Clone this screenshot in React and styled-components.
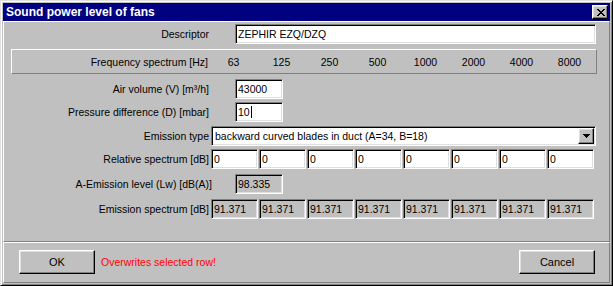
import React from 'react';
import styled, { createGlobalStyle } from 'styled-components';

const FONT = '"Liberation Sans", Arial, sans-serif';

const COLORS = {
  face: '#c0c0c0',
  light: '#dfdfdf',
  shadow: '#808080',
  dark: '#000000',
  white: '#ffffff',
  navy: '#000080',
  alert: '#ff0000',
};

const FREQUENCIES = [63, 125, 250, 500, 1000, 2000, 4000, 8000];
const RELATIVE = ['0', '0', '0', '0', '0', '0', '0', '0'];
const EMISSION = ['91.371', '91.371', '91.371', '91.371', '91.371', '91.371', '91.371', '91.371'];

const GlobalStyle = createGlobalStyle`
  html, body {
    margin: 0;
    padding: 0;
    background: ${COLORS.face};
  }
  body {
    font-family: ${FONT};
    font-size: 10.5px;
    color: ${COLORS.dark};
  }
`;

const CloseGlyph = () => (
  <svg width="8" height="7" viewBox="0 0 8 7" shapeRendering="crispEdges">
    <path
      fill="#000"
      d="M0 0h2v1H0zM6 0h2v1H6zM1 1h2v1H1zM5 1h2v1H5zM2 2h4v1H2zM3 3h2v1H3zM2 4h4v1H2zM1 5h2v1H1zM5 5h2v1H5zM0 6h2v1H0zM6 6h2v1H6z"
    />
  </svg>
);

const ArrowGlyph = () => (
  <svg width="7" height="4" viewBox="0 0 7 4" shapeRendering="crispEdges">
    <path fill="#000" d="M0 0h7v1H0zM1 1h5v1H1zM2 2h3v1H2zM3 3h1v1H3z" />
  </svg>
);

const App = () => {
  return (
    <>
      <GlobalStyle />
      <Window>
        <TitleBar>
          <Title>Sound power level of fans</Title>
          <CloseButton>
            <CloseGlyph />
          </CloseButton>
        </TitleBar>

        <Panel $height={221}>
          <Form>
            <Row $top={2}>
              <Label>Descriptor</Label>
              <Field $indent={24}>ZEPHIR EZQ/DZQ</Field>
            </Row>

            <FreqBox>
              <FreqLabel>Frequency spectrum [Hz]</FreqLabel>
              {FREQUENCIES.map((f) => (
                <FreqValue key={f}>{f}</FreqValue>
              ))}
            </FreqBox>

            <Row $top={5}>
              <Label>Air volume (V) [m³/h]</Label>
              <Field $indent={24} $width={48}>43000</Field>
            </Row>

            <Row $top={3}>
              <Label>Pressure difference (D) [mbar]</Label>
              <Field $indent={24} $width={48}>
                10<Caret />
              </Field>
            </Row>

            <Row $top={4}>
              <Label>Emission type</Label>
              <Combo>
                <ComboText>backward curved blades in duct (A=34, B=18)</ComboText>
                <ComboButton>
                  <ArrowGlyph />
                </ComboButton>
              </Combo>
            </Row>

            <Row $top={3}>
              <Label>Relative spectrum [dB]</Label>
              <Spectrum>
                {RELATIVE.map((v, i) => (
                  <Field key={i}>{v}</Field>
                ))}
              </Spectrum>
            </Row>

            <Row $top={5}>
              <Label $nudge={3}>A-Emission level (Lw) [dB(A)]</Label>
              <Field $indent={24} $width={48} $readOnly>98.335</Field>
            </Row>

            <Row $top={5}>
              <Label>Emission spectrum [dB]</Label>
              <Spectrum>
                {EMISSION.map((v, i) => (
                  <Field key={i} $readOnly>{v}</Field>
                ))}
              </Spectrum>
            </Row>
          </Form>
        </Panel>

        <Footer>
          <ButtonGroup>
            <Button>OK</Button>
            <Warning>Overwrites selected row!</Warning>
          </ButtonGroup>
          <Button>Cancel</Button>
        </Footer>
      </Window>
    </>
  );
};

const Window = styled.div`
  box-sizing: border-box;
  width: 613px;
  height: 286px;
  padding: 2px;
  display: flex;
  flex-direction: column;
  background: ${COLORS.face};
  border: 1px solid;
  border-color: ${COLORS.light} ${COLORS.dark} ${COLORS.dark} ${COLORS.light};
  box-shadow: inset 1px 1px ${COLORS.white}, inset -1px -1px ${COLORS.shadow};
`;

const TitleBar = styled.div`
  flex: none;
  height: 18px;
  display: flex;
  align-items: center;
  padding: 0 2px 0 3px;
  background: ${COLORS.navy};
  color: ${COLORS.white};
`;

const Title = styled.span`
  flex: 1;
  font-size: 12px;
  font-weight: bold;
  line-height: 18px;
  white-space: nowrap;
`;

const raised = `
  border: 1px solid;
  border-color: ${COLORS.white} ${COLORS.dark} ${COLORS.dark} ${COLORS.white};
  box-shadow: inset -1px -1px ${COLORS.shadow}, inset 1px 1px ${COLORS.light};
`;

const sunken = `
  border: 1px solid;
  border-color: ${COLORS.shadow} ${COLORS.white} ${COLORS.white} ${COLORS.shadow};
  box-shadow: inset 1px 1px ${COLORS.dark}, inset -1px -1px ${COLORS.light};
`;

const CloseButton = styled.div`
  box-sizing: border-box;
  width: 16px;
  height: 14px;
  display: flex;
  align-items: center;
  justify-content: center;
  padding-left: 1px;
  background: ${COLORS.face};
  ${raised}
`;

const Panel = styled.div`
  flex: none;
  box-sizing: border-box;
  height: ${(p) => p.$height}px;
  border: 1px solid;
  border-color: ${COLORS.white} ${COLORS.shadow} ${COLORS.shadow} ${COLORS.white};
`;

const Form = styled.div`
  display: flex;
  flex-direction: column;
  padding-right: 13px;
`;

const Row = styled.div`
  display: grid;
  grid-template-columns: 205px 1fr;
  column-gap: 2px;
  align-items: center;
  height: 20px;
  margin-top: ${(p) => p.$top}px;
`;

const Label = styled.div`
  text-align: right;
  white-space: nowrap;
  margin-right: ${(p) => -(p.$nudge || 0)}px;
`;

const Field = styled.div`
  box-sizing: border-box;
  height: 20px;
  width: ${(p) => (p.$width ? `${p.$width}px` : 'auto')};
  margin-left: ${(p) => p.$indent || 0}px;
  padding: 0 2px;
  display: flex;
  align-items: center;
  white-space: nowrap;
  overflow: hidden;
  background: ${(p) => (p.$readOnly ? COLORS.face : COLORS.white)};
  ${sunken}
`;

const Caret = styled.span`
  display: inline-block;
  width: 1px;
  height: 12px;
  margin-left: 1px;
  background: ${COLORS.dark};
`;

const FreqBox = styled.div`
  box-sizing: border-box;
  height: 25px;
  margin: 5px -1px 0 7px;
  display: grid;
  grid-template-columns: 197px repeat(8, 47px);
  column-gap: 1px;
  align-items: center;
  border: 1px solid;
  border-color: ${COLORS.white} ${COLORS.shadow} ${COLORS.shadow} ${COLORS.white};
`;

const FreqLabel = styled.div`
  text-align: right;
  white-space: nowrap;
  margin-right: 1px;
`;

const FreqValue = styled.div`
  text-align: center;
`;

const Combo = styled.div`
  box-sizing: border-box;
  height: 20px;
  display: flex;
  align-items: center;
  background: ${COLORS.white};
  ${sunken}
`;

const ComboText = styled.span`
  flex: 1;
  padding-left: 3px;
  white-space: nowrap;
`;

const ComboButton = styled.div`
  box-sizing: border-box;
  width: 16px;
  height: 16px;
  margin-right: 1px;
  display: flex;
  align-items: center;
  justify-content: center;
  background: ${COLORS.face};
  ${raised}
`;

const Spectrum = styled.div`
  display: grid;
  grid-template-columns: repeat(8, 47px);
  column-gap: 1px;
`;

const Footer = styled.div`
  flex: 1;
  box-sizing: border-box;
  display: flex;
  align-items: flex-start;
  justify-content: space-between;
  padding: 7px 14px 0 15px;
  border: 1px solid;
  border-color: ${COLORS.white} ${COLORS.shadow} ${COLORS.shadow} ${COLORS.white};
`;

const ButtonGroup = styled.div`
  display: flex;
  align-items: center;
`;

const Button = styled.div`
  box-sizing: border-box;
  width: 76px;
  height: 24px;
  display: flex;
  align-items: center;
  justify-content: center;
  font-size: 11px;
  background: ${COLORS.face};
  ${raised}
`;

const Warning = styled.span`
  margin-left: 6px;
  color: ${COLORS.alert};
  white-space: nowrap;
`;

export default App;
